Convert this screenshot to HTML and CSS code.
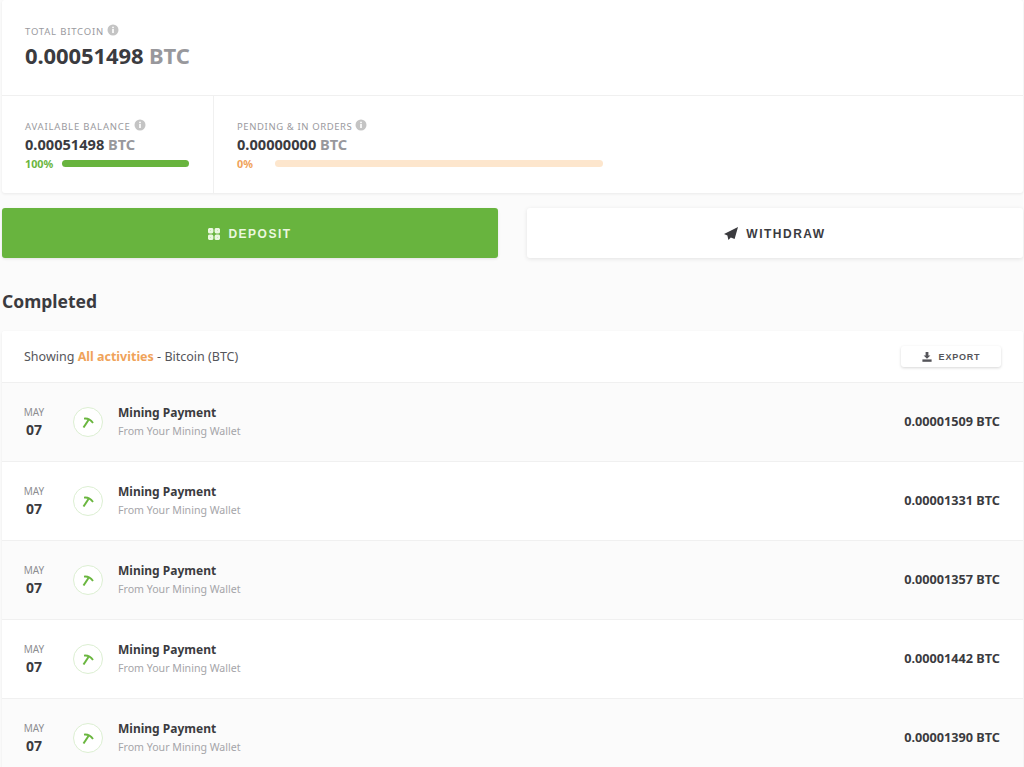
FILE: index.html
```html
<!DOCTYPE html>
<html lang="en">
<head>
<meta charset="utf-8">
<title>Bitcoin wallet</title>
<link rel="stylesheet" href="styles.css">
</head>
<body>
<main class="page">
  <section class="card summary">
    <div class="total">
      <div class="label">TOTAL BITCOIN<svg class="info" viewBox="0 0 12 12"><circle cx="6" cy="6" r="5.5" fill="#c4c4c4"/><rect x="5.2" y="5" width="1.6" height="4" fill="#fff"/><rect x="5.2" y="2.7" width="1.6" height="1.5" fill="#fff"/></svg></div>
      <div class="total-value">0.00051498 <span class="unit">BTC</span></div>
    </div>
    <div class="balances">
      <div class="balance available">
        <div class="label">AVAILABLE BALANCE<svg class="info" viewBox="0 0 12 12"><circle cx="6" cy="6" r="5.5" fill="#c4c4c4"/><rect x="5.2" y="5" width="1.6" height="4" fill="#fff"/><rect x="5.2" y="2.7" width="1.6" height="1.5" fill="#fff"/></svg></div>
        <div class="balance-value">0.00051498 <span class="unit">BTC</span></div>
        <div class="progress"><span class="pct green">100%</span><span class="bar bar-green"></span></div>
      </div>
      <div class="balance pending">
        <div class="label">PENDING &amp; IN ORDERS<svg class="info" viewBox="0 0 12 12"><circle cx="6" cy="6" r="5.5" fill="#c4c4c4"/><rect x="5.2" y="5" width="1.6" height="4" fill="#fff"/><rect x="5.2" y="2.7" width="1.6" height="1.5" fill="#fff"/></svg></div>
        <div class="balance-value">0.00000000 <span class="unit">BTC</span></div>
        <div class="progress"><span class="pct orange">0%</span><span class="bar bar-orange"></span></div>
      </div>
    </div>
  </section>

  <div class="actions">
    <a class="btn btn-deposit"><svg class="btn-icon" viewBox="0 0 12 12" fill="none" stroke="currentColor" stroke-width="2.5"><rect x="1.2" y="1.2" width="3" height="3" rx="0.6"/><rect x="7.8" y="1.2" width="3" height="3" rx="0.6"/><rect x="1.2" y="7.8" width="3" height="3" rx="0.6"/><rect x="7.8" y="7.8" width="3" height="3" rx="0.6"/></svg>DEPOSIT</a>
    <a class="btn btn-withdraw"><svg class="btn-icon plane" viewBox="0 0 14 13" fill="currentColor"><path d="M14 0 L0 7 L3.4 8.6 L4.4 13 L6.8 10.4 L10.6 12 Z"/></svg>WITHDRAW</a>
  </div>

  <h2 class="heading">Completed</h2>

  <section class="card activity">
    <header class="activity-head">
      <div class="showing">Showing <b class="accent">All activities</b> - Bitcoin (BTC)</div>
      <a class="export"><svg class="export-icon" viewBox="0 0 10 10" fill="currentColor"><path d="M3.6 0h2.8v3.4H8.4L5 6.8 1.6 3.4h2z"/><rect x="0.4" y="7.4" width="9.2" height="2.4"/></svg>EXPORT</a>
    </header>

    <div class="row">
      <div class="date"><span class="month">MAY</span><span class="day">07</span></div>
      <span class="badge"><svg class="pick" viewBox="0 0 12 12" fill="none" stroke="#6ab63f"><path d="M1.5 11.5 L6.5 4" stroke-width="2"/><path d="M2 2.6 Q7.5 2 11 7" stroke-width="1.9"/></svg></span>
      <div class="desc"><div class="title">Mining Payment</div><div class="sub">From Your Mining Wallet</div></div>
      <div class="amount">0.00001509 BTC</div>
    </div>
    <div class="row">
      <div class="date"><span class="month">MAY</span><span class="day">07</span></div>
      <span class="badge"><svg class="pick" viewBox="0 0 12 12" fill="none" stroke="#6ab63f"><path d="M1.5 11.5 L6.5 4" stroke-width="2"/><path d="M2 2.6 Q7.5 2 11 7" stroke-width="1.9"/></svg></span>
      <div class="desc"><div class="title">Mining Payment</div><div class="sub">From Your Mining Wallet</div></div>
      <div class="amount">0.00001331 BTC</div>
    </div>
    <div class="row">
      <div class="date"><span class="month">MAY</span><span class="day">07</span></div>
      <span class="badge"><svg class="pick" viewBox="0 0 12 12" fill="none" stroke="#6ab63f"><path d="M1.5 11.5 L6.5 4" stroke-width="2"/><path d="M2 2.6 Q7.5 2 11 7" stroke-width="1.9"/></svg></span>
      <div class="desc"><div class="title">Mining Payment</div><div class="sub">From Your Mining Wallet</div></div>
      <div class="amount">0.00001357 BTC</div>
    </div>
    <div class="row">
      <div class="date"><span class="month">MAY</span><span class="day">07</span></div>
      <span class="badge"><svg class="pick" viewBox="0 0 12 12" fill="none" stroke="#6ab63f"><path d="M1.5 11.5 L6.5 4" stroke-width="2"/><path d="M2 2.6 Q7.5 2 11 7" stroke-width="1.9"/></svg></span>
      <div class="desc"><div class="title">Mining Payment</div><div class="sub">From Your Mining Wallet</div></div>
      <div class="amount">0.00001442 BTC</div>
    </div>
    <div class="row">
      <div class="date"><span class="month">MAY</span><span class="day">07</span></div>
      <span class="badge"><svg class="pick" viewBox="0 0 12 12" fill="none" stroke="#6ab63f"><path d="M1.5 11.5 L6.5 4" stroke-width="2"/><path d="M2 2.6 Q7.5 2 11 7" stroke-width="1.9"/></svg></span>
      <div class="desc"><div class="title">Mining Payment</div><div class="sub">From Your Mining Wallet</div></div>
      <div class="amount">0.00001390 BTC</div>
    </div>
  </section>
</main>
</body>
</html>
```
FILE: styles.css
```css
* { box-sizing: border-box; }
html, body { margin: 0; height: 767px; overflow: hidden; }
body {
  background: #fbfbfb;
  color: #3b3b3f;
  font-family: "Noto Sans", "Open Sans", sans-serif;
}
.page { padding: 0 1px 0 2px; }
.card {
  background: #fff;
  border-radius: 3px;
  box-shadow: 0 1px 3px rgba(0, 0, 0, 0.07);
}
.summary { height: 193px; display: flex; flex-direction: column; }
.total { height: 96px; padding-top: 24px; padding-left: 23px; border-bottom: 1px solid #f0f0f0; }
.label {
  display: flex;
  align-items: center;
  gap: 3px;
  height: 14px;
  font-size: 9.5px;
  letter-spacing: 0.8px;
  color: #9a9a9e;
  white-space: pre;
}
.pending .label { letter-spacing: 0.6px; }
.info { width: 12px; height: 12px; margin-top: -2px; }
.total-value { font-size: 22px; font-weight: 700; line-height: 28px; margin-top: 3px; letter-spacing: -0.1px; }
.unit { color: #98989c; }
.balances { flex: 1; display: flex; }
.balance { padding: 23px 0 0 23px; }
.available { width: 212px; border-right: 1px solid #f0f0f0; padding-right: 24px; }
.pending { flex: 1; padding-left: 23px; padding-right: 420px; }
.balance-value { font-size: 14.6px; font-weight: 700; line-height: 18px; margin-top: 2px; }
.progress { display: flex; align-items: center; height: 12px; margin-top: 4px; }
.pct { font-size: 10.8px; font-weight: 700; width: 37px; flex: none; }
.pending .pct { width: 38px; }
.green { color: #6ab63f; }
.orange { color: #f0a35a; }
.bar { flex: 1; height: 7px; border-radius: 4px; }
.bar-green { background: #68b43e; }
.bar-orange { background: #fde6cd; }
.actions { display: grid; grid-template-columns: 1fr 1fr; gap: 29px; margin-top: 15px; }
.btn {
  display: flex;
  align-items: center;
  justify-content: center;
  height: 50px;
  padding-top: 1px;
  border-radius: 3px;
  font-family: "Liberation Sans", Arial, sans-serif;
  font-size: 12px;
  font-weight: 700;
  letter-spacing: 1.5px;
}
.btn-icon { width: 12px; height: 12px; margin-right: 8px; }
.plane { width: 14px; height: 13px; }
.btn-deposit { background: #68b43e; color: #eaf7df; box-shadow: 0 1px 3px rgba(0, 0, 0, 0.1); }
.btn-withdraw { background: #fff; color: #3b3b3f; box-shadow: 0 1px 4px rgba(0, 0, 0, 0.1); }
.heading { margin: 31px 0 17px; font-size: 17.5px; line-height: 25px; font-weight: 700; color: #3b3b3f; }
.activity { overflow: hidden; }
.activity-head {
  height: 52px;
  display: flex;
  align-items: center;
  justify-content: space-between;
  padding: 0 22px;
  background: #fff;
  border-bottom: 1px solid #f0f0f0;
}
.showing { font-size: 12.5px; color: #55555a; white-space: pre; }
.accent { color: #f0a35a; font-weight: 700; }
.export {
  display: flex;
  align-items: center;
  justify-content: center;
  width: 100px;
  height: 21px;
  border-radius: 3px;
  background: #fff;
  box-shadow: 0 1px 3px rgba(0, 0, 0, 0.16);
  font-family: "Liberation Sans", Arial, sans-serif;
  font-size: 9px;
  font-weight: 700;
  letter-spacing: 0.8px;
  color: #55555a;
}
.export-icon { width: 10px; height: 10px; margin-right: 7px; }
.row {
  height: 79px;
  display: flex;
  align-items: center;
  padding: 0 23px 0 20px;
  background: #fbfbfb;
  border-bottom: 1px solid #f0f0f0;
}
.row:nth-of-type(even) { background: #fff; }
.date { width: 51px; display: flex; flex-direction: column; align-items: flex-start; margin-top: 1px; }
.month { width: 24px; text-align: center; font-size: 10px; line-height: 14px; color: #8d8d91; }
.day { width: 24px; text-align: center; font-size: 14px; font-weight: 700; line-height: 22px; }
.badge {
  width: 30px;
  height: 30px;
  flex: none;
  display: flex;
  align-items: center;
  justify-content: center;
  border-radius: 50%;
  background: #fff;
  border: 1.5px solid #dcefd2;
  margin-right: 15px;
  margin-top: -1px;
}
.pick { width: 12px; height: 12px; }
.desc { flex: 1; margin-top: -1px; }
.title { font-size: 12px; font-weight: 700; line-height: 18px; }
.sub { font-size: 10.6px; line-height: 15px; margin-top: 2px; color: #a5a5a9; }
.amount { font-size: 12.7px; font-weight: 700; margin-top: -3px; }
```
